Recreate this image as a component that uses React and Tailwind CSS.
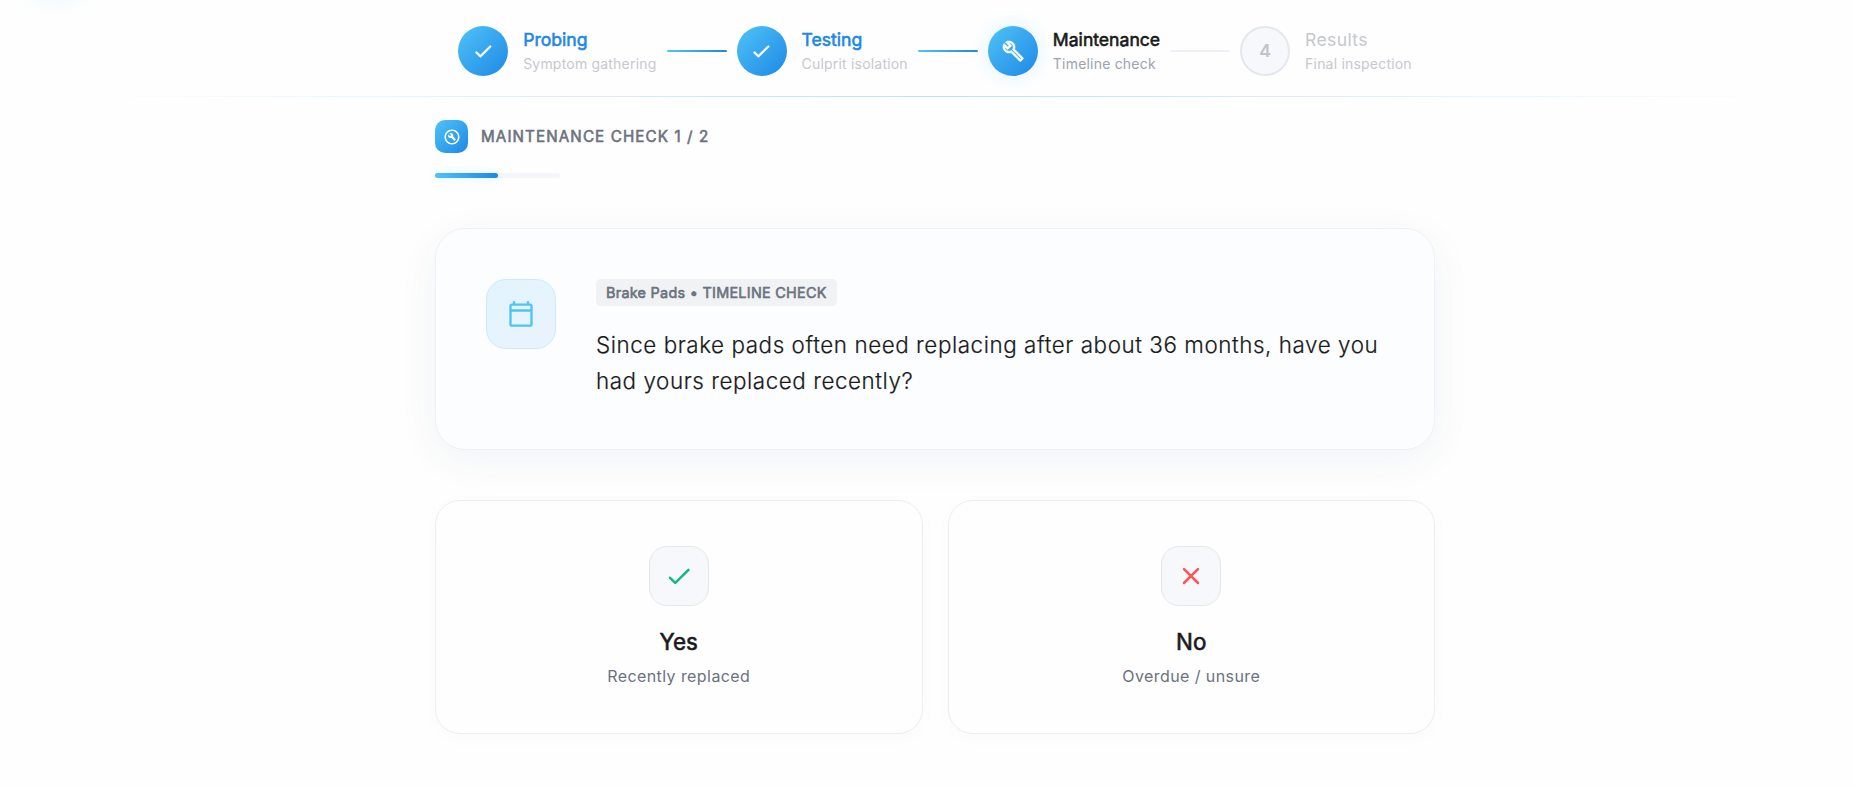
import React from "react";
import {
  MdOutlineBuild,
  MdOutlineBuildCircle,
  MdOutlineCalendarToday,
} from "react-icons/md";

const steps = [
  { title: "Probing", sub: "Symptom gathering", state: "done" },
  { title: "Testing", sub: "Culprit isolation", state: "done" },
  { title: "Maintenance", sub: "Timeline check", state: "active" },
  { title: "Results", sub: "Final inspection", state: "todo" },
];

const circle = {
  done: "bg-linear-135 from-[#4fc3f7] to-[#1e88e5] text-white",
  active:
    "bg-linear-135 from-[#4fc3f7] to-[#1e88e5] text-white shadow-[0_0_20px_rgba(79,195,247,0.2)]",
  todo: "border-2 border-[#e4e7ee] bg-[#f7f8fc] text-[#c0c3ca]",
};
const title = {
  done: "[-webkit-text-stroke:0.6px] tracking-[0px] text-[#1e88e5]",
  active: "[-webkit-text-stroke:0.6px] tracking-[0px] text-[#1a1a1a]",
  todo: "tracking-[0.35px] text-[#c6c8ce]",
};
const sub = {
  done: "text-[#c6c8ce]",
  active: "text-[#9ca3af]",
  todo: "text-[#c6c8ce]",
};

function Check({ className }) {
  return (
    <svg viewBox="0 0 24 24" fill="currentColor" className={className}>
      <path d="M9 16.17 5.53 12.7a.996.996 0 1 0-1.41 1.41l4.18 4.18c.39.39 1.02.39 1.41 0L20.29 7.71a.996.996 0 1 0-1.41-1.41L9 16.17z" />
    </svg>
  );
}

function Close({ className }) {
  return (
    <svg viewBox="0 0 24 24" fill="currentColor" className={className}>
      <path d="M18.3 5.71a.996.996 0 0 0-1.41 0L12 10.59 7.11 5.7A.996.996 0 1 0 5.7 7.11L10.59 12 5.7 16.89a.996.996 0 1 0 1.41 1.41L12 13.41l4.89 4.89a.996.996 0 1 0 1.41-1.41L13.41 12l4.89-4.89c.38-.38.38-1.02 0-1.4z" />
    </svg>
  );
}

function Step({ step, index }) {
  return (
    <div className="flex items-center gap-[15px]">
      <div
        className={`flex size-[50px] shrink-0 items-center justify-center rounded-full text-[17.6px] font-semibold ${circle[step.state]}`}
      >
        {step.state === "done" && (
          <Check className="size-[22.4px] [stroke-width:0.5] [stroke:currentColor]" />
        )}
        {step.state === "active" && (
          <MdOutlineBuild className="size-[22.4px] [&>path:last-child]:[stroke-width:0.6] [&>path:last-child]:[stroke:currentColor]" />
        )}
        {step.state === "todo" && index + 1}
      </div>
      <div className="flex flex-col gap-[2px] whitespace-nowrap">
        <div className={`text-[17.6px] leading-[24px] font-normal ${title[step.state]}`}>
          {step.title}
        </div>
        <div
          className={`text-[14px] leading-[20px] font-normal tracking-[0.2px] ${sub[step.state]}`}
        >
          {step.sub}
        </div>
      </div>
    </div>
  );
}

function Answer({ icon, label, note }) {
  return (
    <button className="flex h-[234px] flex-col items-center rounded-[25px] border border-[#ecedf3] bg-[#fefefe] pt-[45px] shadow-[0_4px_20px_rgba(0,0,0,0.02)]">
      <span className="flex size-[60px] items-center justify-center rounded-[18px] border border-[#e4e7ee] bg-[#f7f8fc]">
        {icon}
      </span>
      <span className="mt-[20px] text-[22.4px] leading-[32px] font-normal tracking-[0px] text-[#1a1a1a] [-webkit-text-stroke:0.6px]">
        {label}
      </span>
      <span className="mt-[5px] text-[16px] leading-[26px] font-normal tracking-[0.42px] text-[#6b7280]">
        {note}
      </span>
    </button>
  );
}

export default function App() {
  return (
    <div className="h-[787px] w-full overflow-hidden bg-[#fefefe] font-['Inter',sans-serif]">
      <div className="relative w-[1870px]">
        <div className="absolute -top-[60px] left-[26px] size-[62px] rounded-full bg-[#4fc3f7]/10 blur-[12px]" />
        <header className="flex h-[96px] items-center justify-center gap-[10px] pt-[6px]">
          {steps.map((s, i) => (
            <React.Fragment key={s.title}>
              {i > 0 && (
                <div
                  className={
                    i < 3
                      ? "h-[2.5px] w-[60px] rounded-[2px] bg-linear-to-r from-[#4fc3f7] to-[#1e88e5]"
                      : "h-[2.5px] w-[60px] rounded-[2px] bg-[#eff0f5]"
                  }
                />
              )}
              <Step step={s} index={i} />
            </React.Fragment>
          ))}
        </header>
        <div className="mx-[94px] h-px bg-linear-to-r from-transparent via-[#b3e5fc] to-transparent" />
        <main className="mx-auto w-[1000px] pt-[23px]">
          <div className="flex items-center gap-[13px]">
            <div className="flex size-[33px] items-center justify-center rounded-[10px] bg-linear-135 from-[#4fc3f7] to-[#1e88e5] text-white">
              <MdOutlineBuildCircle className="size-[18px] [&>path:not(:first-child)]:[stroke-width:0.8] [&>path:not(:first-child)]:[stroke:currentColor]" />
            </div>
            <div className="pt-px text-[15.2px] leading-[24px] font-normal tracking-[1.1px] text-[#6b7280] [-webkit-text-stroke:0.6px]">
              MAINTENANCE CHECK 1 / 2
            </div>
          </div>
          <div className="mt-[20px] h-[5px] w-[125px] rounded-[3px] bg-[#f5f6fa]">
            <div className="h-full w-1/2 rounded-[3px] bg-linear-to-r from-[#4fc3f7] to-[#1e88e5] shadow-[0_0_10px_rgba(79,195,247,0.2)]" />
          </div>
          <section className="mt-[50px] flex h-[222px] gap-[40px] rounded-[30px] border border-[#eff1f6] bg-[#fcfdfe] px-[50px] pt-[50px] shadow-[0_10px_40px_rgba(30,70,100,0.06)]">
            <div className="flex size-[70px] shrink-0 items-center justify-center rounded-[20px] border border-[#cdeafb] bg-linear-135 from-[#e1f4fd] to-[#eaf3fd] text-[#4fc3f7]">
              <MdOutlineCalendarToday className="size-[28px]" />
            </div>
            <div className="flex flex-col items-start">
              <div className="flex h-[27px] items-center rounded-[5px] bg-[#f1f2f4] px-[10px] text-[14.4px] font-normal tracking-[0.28px] text-[#6b7280] [-webkit-text-stroke:0.6px]">
                Brake Pads • TIMELINE CHECK
              </div>
              <h1 className="mt-[21px] text-[22.4px] leading-[36px] font-light tracking-[0.56px] whitespace-nowrap text-[#1a1a1a] [-webkit-text-stroke:0.2px]">
                Since brake pads often need replacing after about 36 months, have you
                <br />
                had yours replaced recently?
              </h1>
            </div>
          </section>
          <div className="mt-[50px] grid grid-cols-2 gap-[25px]">
            <Answer
              icon={<Check className="size-[30px] text-[#10b981]" />}
              label="Yes"
              note="Recently replaced"
            />
            <Answer
              icon={<Close className="size-[30px] text-[#ff5252]" />}
              label="No"
              note="Overdue / unsure"
            />
          </div>
        </main>
      </div>
    </div>
  );
}
